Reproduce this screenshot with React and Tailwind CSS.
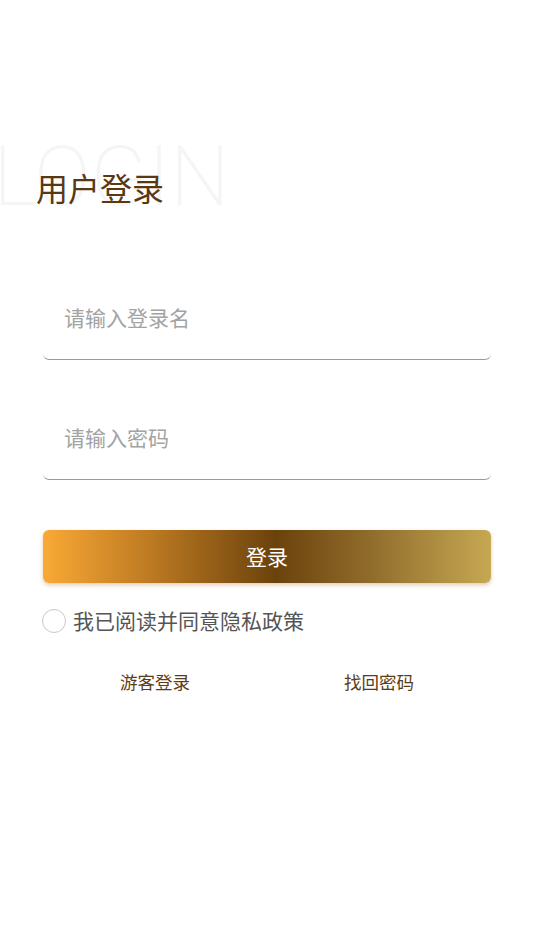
import React from "react";

export default function App() {
  const cjk = { fontFamily: '"Noto Sans CJK SC", "Noto Sans", sans-serif' };
  return (
    <div className="relative w-[534px] h-[950px] bg-white overflow-hidden" style={cjk}>
      <div className="relative pt-[171px]">
        <div
          className="absolute left-[-7px] top-[135px] text-[84px] leading-none font-extralight text-[#f5f5f5] select-none"
          style={{ fontFamily: 'Roboto, "Noto Sans", sans-serif' }}
        >
          LOGIN
        </div>
        <h1 className="relative pl-[36px] text-[32px] leading-[33px] text-[#5a3912] font-normal">用户登录</h1>
      </div>

      <div className="px-[43px] pt-[75px]">
        <div className="h-[81px] flex items-center pb-[3px] pl-[21px] border-b border-[#9a9a9a] rounded-md">
          <span className="text-[21px] text-[#a3a3a3]">请输入登录名</span>
        </div>
        <div className="mt-[39px] h-[81px] flex items-center pb-[3px] pl-[21px] border-b border-[#9a9a9a] rounded-md">
          <span className="text-[21px] text-[#a3a3a3]">请输入密码</span>
        </div>

        <button
          className="mt-[50px] w-full h-[53px] rounded-[6px] flex items-center justify-center text-white text-[21px] shadow-[0_2px_4px_rgba(160,110,40,0.35)]"
          style={{ background: "linear-gradient(90deg, #f9a935 0%, #c27e24 22%, #6b420c 52%, #8e6a2a 72%, #c6a853 100%)" }}
        >
          登录
        </button>

        <div className="mt-[22px] -ml-[1px] flex items-center">
          <div className="w-[24px] h-[24px] rounded-full border border-[#c8c8c8]" />
          <span className="ml-[7px] text-[21px] text-[#555555]">我已阅读并同意隐私政策</span>
        </div>

        <div className="mt-[32px] flex">
          <div className="flex-1 text-center text-[17.5px] text-[#5c3c14]">游客登录</div>
          <div className="flex-1 text-center text-[17.5px] text-[#5c3c14]">找回密码</div>
        </div>
      </div>
    </div>
  );
}
